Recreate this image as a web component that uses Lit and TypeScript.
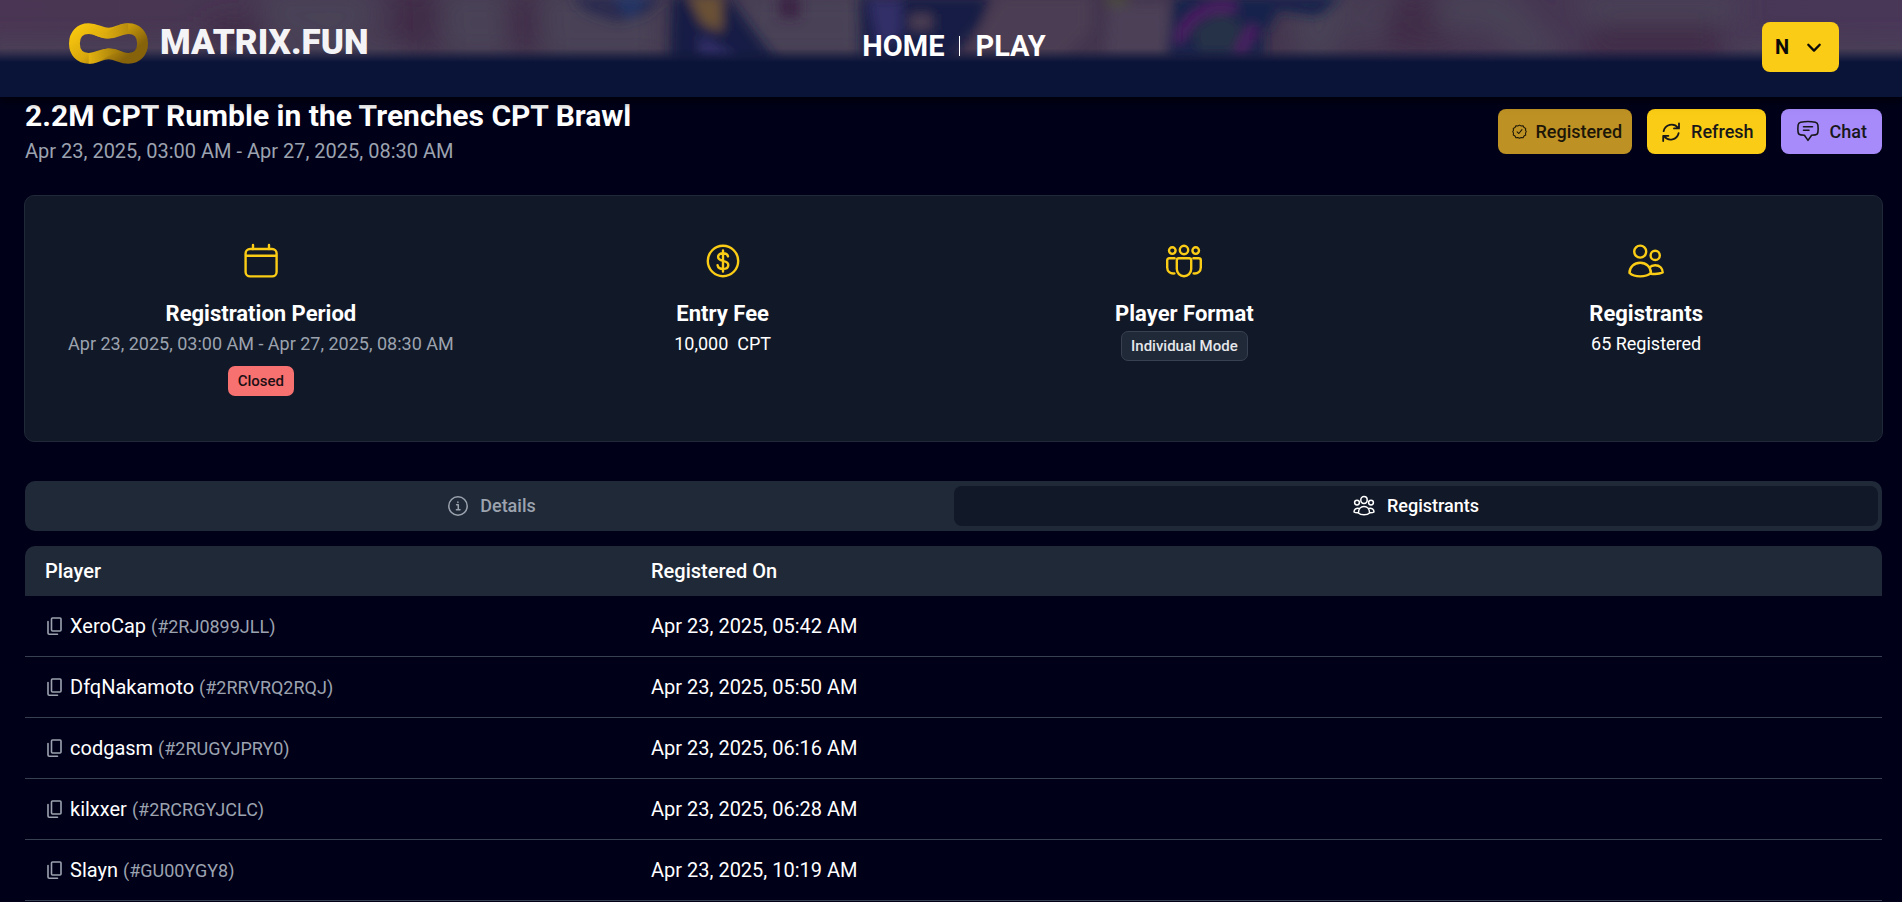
import { LitElement, html, svg, css } from "lit";
import { customElement, property, state } from "lit/decorators.js";
import { classMap } from "lit/directives/class-map.js";

const icons: Record<string, unknown> = {
  calendar: svg`<rect x="4.6" y="8" width="31" height="27.4" rx="4.5"/><path d="M5 14.8h30M12 4v4M28 4v4"/>`,
  dollar: svg`<circle cx="20" cy="20" r="15.2"/><path d="M20 9.5v21M25 15.4c-.4-2-2.400-3.200-5-3.200-2.800 0-4.900 1.400-4.900 3.800 0 5.300 10.200 2.500 10.200 7.900 0 2.600-2.300 4-5.300 4-3 0-5-1.400-5.400-3.700"/>`,
  team: svg`<circle cx="8.300" cy="9.600" r="3.300"/><circle cx="20" cy="9" r="4.200"/><circle cx="31.700" cy="9.600" r="3.300"/><path d="M14.800 17.200h10.400c1.200 0 2 .8 2 2v8.800a7.200 7.200 0 0 1-14.400 0v-8.800c0-1.200.8-2 2-2zM10.600 17.200H5.300c-1.300 0-2.100.8-2.100 2v7.300c0 3.800 3 6.500 7.200 5.900M29.400 17.200h5.300c1.300 0 2.100.8 2.100 2v7.300c0 3.800-3 6.500-7.200 5.900"/>`,
  people: svg`<circle cx="14.200" cy="10.600" r="6"/><circle cx="29.200" cy="14.400" r="4.600"/><path d="M14.200 21.800c6 0 10.700 4.300 10.700 10.100-2.500 2.400-6.400 3.500-10.700 3.500s-8.200-1.100-10.700-3.500c0-5.800 4.700-10.100 10.700-10.100zM23.300 26.600c1.400-1.500 3.500-2.400 5.900-2.400 4.400 0 7.500 3.100 7.500 7.200-2.300 1.300-7.200 1.900-11.800 1.400"/>`,
  refresh: svg`<path d="M2.600 9.200A8.200 8.200 0 0 1 17 5.800M18 1.400v5h-5M17.600 11.200A8.200 8.200 0 0 1 3.200 14.400M2.200 19v-5.200h5.200"/>`,
  chat: svg`<path d="M4.600 2.200C8 1.500 16 1.500 19.400 2.200c1.500.4 2.300 1.300 2.500 2.800.3 2.400.3 4.900 0 7.200-.2 1.600-1 2.600-2.600 2.700l-3.700.4-3.600 5.100-3.600-5.100-3.700-.4c-1.600-.1-2.400-1.100-2.600-2.700-.3-2.300-.3-4.800 0-7.200.2-1.500 1-2.400 2.500-2.800zM7.500 6.800h9M7.500 10.200h5.500"/>`,
  seal: svg`<path d="M10 1.500l2.300 1.100 2.500-.3 1.200 2.300 2.300 1.200-.3 2.500L19 10l-1 2.200.3 2.500-2.300 1.200-1.200 2.300-2.500-.3-2.300 1.100-2.300-1.100-2.500.3-1.200-2.300-2.300-1.200.3-2.500L1 10l1-1.700-.3-2.500L4 4.600l1.200-2.300 2.500.3zM6.800 10.500l2.300 2.200 4.200-5.200"/>`,
  info: svg`<circle cx="10" cy="10" r="9.200"/><path d="M8.600 8.800h1.700v5M8.400 13.800h3.600M9.900 6v.6"/>`,
  group: svg`<ellipse cx="11" cy="5" rx="3.200" ry="3.400"/><circle cx="4" cy="7.600" r="2.400"/><circle cx="18" cy="7.600" r="2.400"/><path d="M11 11.400c3.300 0 5.600 2.800 5.600 6.600-1.400 1.400-3.400 1.800-5.600 1.800s-4.200-.4-5.600-1.800c0-3.800 2.300-6.600 5.600-6.600zM6.600 13.600c-3.200-1-5.600.8-5.600 3.400.8.600 2.200.9 4.400.8M15.400 13.600c3.200-1 5.600.8 5.600 3.400-.8.600-2.200.9-4.400.8"/>`,
  copy: svg`<rect x="5.500" y="1" width="9.500" height="13" rx="1"/><path d="M2 4.500v11.500c0 .7.500 1.200 1.200 1.200h8.300"/>`,
  chevron: svg`<path d="M2 5l5 5.200L12 5"/>`,
};

@customElement("ui-icon")
class UiIcon extends LitElement {
  static styles = css`
    :host { display: inline-flex; flex: none; }
    .glyph { display: block; fill: none; stroke: currentColor; stroke-linecap: round; stroke-linejoin: round; overflow: visible; }
  `;
  @property() name = "";
  @property({ type: Number }) size = 20;
  @property({ type: Number }) box = 20;
  @property({ type: Number }) weight = 2;
  render() {
    return html`<svg class="glyph" aria-hidden="true" width=${this.size} height=${this.size}
      viewBox="0 0 ${this.box} ${this.box}" stroke-width=${this.weight}>${icons[this.name]}</svg>`;
  }
}

@customElement("site-header")
class SiteHeader extends LitElement {
  static styles = css`
    :host { display: block; position: relative; background: #0a1439; box-shadow: 0 3px 10px #000008; }
    .art { position: absolute; inset: 0; width: 100%; height: 100%; }
    .bar { position: relative; display: grid; grid-template-columns: 1fr auto 1fr; align-items: center; height: 97px; padding: 0 63px 0 69px; }
    .brand { display: flex; align-items: center; gap: 12px; color: #f4f4f6; text-decoration: none; font: 900 35px/42px Roboto, sans-serif; justify-self: start; padding-bottom: 11px; }
    .mark { display: block; }
    .links { display: flex; align-items: center; gap: 15px; font-size: 29px; line-height: 40px; font-weight: 700; padding-bottom: 6px; }
    .link { color: #fff; text-decoration: none; }
    .rule { width: 1px; height: 20px; background: #fff; }
    .user { display: flex; align-items: center; gap: 17px; height: 50px; padding: 0 17px 0 13px; margin-bottom: 3px; border: 0; border-radius: 8px; background: #facc15; color: #0a0a0a; font: 700 20px/28px Roboto, sans-serif; justify-self: end; }
  `;
  render() {
    return html`
      <svg class="art" viewBox="0 0 1902 97" preserveAspectRatio="none" aria-hidden="true">
        <defs>
          <filter id="soft" x="-5%" y="-50%" width="110%" height="200%"><feGaussianBlur stdDeviation="6"/></filter>
          <filter id="haze" x="-5%" y="-50%" width="110%" height="200%"><feGaussianBlur stdDeviation="13"/></filter>
          <linearGradient id="fade" x1="0" y1="0" x2="0" y2="97" gradientUnits="userSpaceOnUse">
            <stop offset=".5" stop-color="#0a1439" stop-opacity="0"/>
            <stop offset=".64" stop-color="#0a1439"/>
          </linearGradient>
          <linearGradient id="sky"><stop offset="0" stop-color="#4a3654"/><stop offset=".3" stop-color="#43374e"/><stop offset=".7" stop-color="#43354e"/><stop offset="1" stop-color="#493758"/></linearGradient>
        </defs>
        <rect width="1902" height="97" fill="url(#sky)"/>
        <g filter="url(#haze)">
          <path fill="#494257" d="M-20 44h440v24H-20zM260-10h110l10 34-40 20-70-10zM440-10h70l15 66h-80zM540-10h120v70H545zM740-10h130v70H735z"/>
          <path fill="#412b46" d="M395-10h45l-5 60h-40zM505 0l30-8v60h-25zM210 20h50v30h-50zM1390 0h44l20 46h-64zM1600 24h120v34h-140z"/>
          <path fill="#4a4356" d="M1290-10h66l-20 70h-40zM1374-10h20l-20 50h-22zM1446-10h60l62 66-40 4-46-34-52 4zM1570-5h170v28h-150zM1730 44h192v24h-192z"/>
        </g>
        <g filter="url(#soft)">
          <path fill="#2b2b50" d="M570-4h95l-18 18-30 8-30-10z"/>
          <path fill="#243466" d="M612-4h38l-20 24z"/>
          <path fill="#151d45" d="M672-4h55l50 66H670zM860-4h130l-10 29-30 35H862z"/>
          <path fill="#6b5135" d="M688-4h34v36l-20-8z"/>
          <path fill="#332f68" d="M700 34l38 24h-38zM868 0h34v36l-24 12z"/>
          <path fill="#3b2144" d="M778-4h22v22h-20z"/>
          <path fill="#4c3d52" d="M910 14h22v16h-22zM1000-4h90v34l-30 30h-90l10-32z"/>
          <path fill="#4c4157" d="M1110 4h58l4 54h-66z"/>
          <path fill="#4b4b3a" d="M1106-4h22v10h-22z"/>
          <path fill="#17204b" d="M1174-4h90v62h-98z"/>
          <path fill="#283247" d="M1192 30l28-18 24 12-10 28h-36z"/>
          <path fill="none" stroke="#541d68" stroke-width="9" d="M1178 42c8-24 26-38 58-34M1238 54l16-28"/>
          <path fill="#17204b" d="M1258-4h84l-24 20-40-6-10 20h-8z"/>
        </g>
        <rect width="1902" height="97" fill="url(#fade)"/>
      </svg>
      <div class="bar">
        <a class="brand" href="#home">
          <svg class="mark" width="79" height="41" viewBox="0 0 80 41" aria-hidden="true">
            <defs>
              <linearGradient id="gold" x1="0" y1="0" x2="1" y2=".5"><stop offset="0" stop-color="#f8c70e"/><stop offset=".5" stop-color="#d9a80d"/><stop offset="1" stop-color="#86620a"/></linearGradient>
              <linearGradient id="foldTop"><stop offset="0" stop-color="#e9b911"/><stop offset=".5" stop-color="#d3a30e"/><stop offset="1" stop-color="#b88c0c"/></linearGradient>
              <linearGradient id="foldLow"><stop offset="0" stop-color="#e3b310"/><stop offset="1" stop-color="#9a740a"/></linearGradient>
            </defs>
            <path fill="none" stroke="url(#gold)" stroke-width="11" d="M20 5.500C11 5.500 5.500 12 5.500 20.500S11 35.500 20 35.500c8 0 12-4.500 20-4.500s12 4.500 20 4.500c9 0 14.500-6.500 14.500-15S69 5.500 60 5.500c-8 0-12 4.500-20 4.500S28 5.500 20 5.500z"/>
            <path fill="url(#foldTop)" d="M26 12c8 4 14 4.500 22 1.500 4-1.500 7-2.500 12-2.500V0c-8 0-12 3-16 5.500-5 3.500-11 6-18 6.500z"/>
            <path fill="url(#foldLow)" d="M54 29c-8-4-14-4.500-22-1.500-4 1.500-7 2.500-12 2.500v11c8 0 12-3 16-5.500 5-3.500 11-6 18-6.500z"/>
          </svg>
          <span>MATRIX.FUN</span>
        </a>
        <nav class="links">
          <a class="link" href="#home">HOME</a><span class="rule"></span><a class="link" href="#play">PLAY</a>
        </nav>
        <button class="user" aria-label="Account menu"><span>N</span><ui-icon name="chevron" size="16" box="14" weight="2"></ui-icon></button>
      </div>`;
  }
}

interface Player { name: string; tag: string; time: string; }

@customElement("app-root")
class AppRoot extends LitElement {
  static styles = css`
    :host { display: block; height: 100vh; overflow: hidden; background: #000019; color: #fff; font: 400 20px/30px Roboto, sans-serif; }
    .page { padding: 0 20px 0 25px; }
    .top { display: flex; justify-content: space-between; align-items: flex-start; }
    .title { margin: 0; font-size: 30px; line-height: 38px; font-weight: 700; }
    .dates { margin: 0; color: #9ca3af; font-size: 20px; line-height: 32px; }
    .actions { display: flex; gap: 15px; padding-top: 12px; }
    .action { display: flex; align-items: center; height: 45px; border: 0; border-radius: 8px; padding: 0 12px 0 14px; gap: 10px; background: #facc15; color: #18181b; font: 500 18px/24px Roboto, sans-serif; }
    .registered { background: #bd9123; gap: 8px; padding-right: 10px; color: #1c1608; }
    .chat { background: #a78bfa; padding: 0 15px; }
    .summary { display: grid; grid-template-columns: repeat(4, 1fr); gap: 50px; margin: 28px -1px 0; padding: 45px 30px; border: 1px solid #1f2937; border-radius: 10px; background: #111827; min-height: 155px; }
    .fact { display: flex; flex-direction: column; align-items: center; text-align: center; }
    .fact ui-icon { color: #facc15; }
    .label { margin: 15px 0 0; font-size: 22px; line-height: 35px; font-weight: 700; }
    .value { margin: 0; font-size: 18px; line-height: 26px; white-space: pre; }
    .muted { color: #9ca3af; }
    .badge { border-radius: 7px; font-size: 15px; line-height: 20px; padding: 5px 10px; font-weight: 500; background: #f87171; color: #1c1014; margin-top: 9px; }
    .mode { background: #1f2937; color: #e5e7eb; border: 1px solid #374151; margin-top: 0; padding: 4px 9px; }
    .tabs { display: grid; grid-template-columns: 1fr 1fr; margin-top: 39px; padding: 5px 4px 5px 5px; border-radius: 10px; background: #1f2937; }
    .tab { display: flex; align-items: center; justify-content: center; gap: 12px; height: 40px; border: 0; border-radius: 8px; background: none; color: #9ca3af; font: 500 18px/24px Roboto, sans-serif; }
    .active { background: #111827; color: #fff; }
    .list { width: 100%; margin-top: 15px; border-collapse: separate; border-spacing: 0; table-layout: fixed; }
    .head { box-sizing: border-box; height: 50px; padding: 0 20px; background: #1f2937; text-align: left; font-weight: 500; }
    .first { width: 606px; }
    .head:first-child { border-top-left-radius: 10px; }
    .head:last-child { border-top-right-radius: 10px; }
    .cell { height: 60px; padding: 0 20px; border-bottom: 1px solid #374151; }
    .player { display: flex; align-items: center; gap: 6px; }
    .copy { display: flex; border: 0; padding: 0 0 0 1px; background: none; color: #9ca3af; }
    .tag { color: #9ca3af; font-size: 18px; }
  `;
  @state() tab = "Registrants";
  players: Player[] = [
    { name: "XeroCap", tag: "#2RJ0899JLL", time: "05:42" },
    { name: "DfqNakamoto", tag: "#2RRVRQ2RQJ", time: "05:50" },
    { name: "codgasm", tag: "#2RUGYJPRY0", time: "06:16" },
    { name: "kilxxer", tag: "#2RCRGYJCLC", time: "06:28" },
    { name: "Slayn", tag: "#GU00YGY8", time: "10:19" },
  ];
  fact(icon: string, label: string, body: unknown) {
    return html`<div class="fact"><ui-icon name=${icon} size="40" box="40" weight="2.4"></ui-icon><h2 class="label">${label}</h2>${body}</div>`;
  }
  tabButton(name: string, icon: string, box: number) {
    const on = this.tab === name;
    return html`<button role="tab" aria-selected=${on} class=${classMap({ tab: true, active: on })} @click=${() => (this.tab = name)}>
      <ui-icon name=${icon} .size=${box} .box=${box} weight="1.5"></ui-icon>${name}</button>`;
  }
  render() {
    const span = "Apr 23, 2025, 03:00 AM - Apr 27, 2025, 08:30 AM";
    return html`
      <site-header></site-header>
      <main class="page">
        <div class="top">
          <div><h1 class="title">2.2M CPT Rumble in the Trenches CPT Brawl</h1><p class="dates">${span}</p></div>
          <div class="actions">
            <button class="action registered"><ui-icon name="seal" size="15" box="20" weight="1.4"></ui-icon>Registered</button>
            <button class="action"><ui-icon name="refresh" size="20" box="20" weight="1.8"></ui-icon>Refresh</button>
            <button class="action chat"><ui-icon name="chat" size="24" box="24" weight="1.6"></ui-icon>Chat</button>
          </div>
        </div>
        <section class="summary">
          ${this.fact("calendar", "Registration Period", html`<p class="value muted">${span}</p><span class="badge">Closed</span>`)}
          ${this.fact("dollar", "Entry Fee", html`<p class="value">10,000  CPT</p>`)}
          ${this.fact("team", "Player Format", html`<span class="badge mode">Individual Mode</span>`)}
          ${this.fact("people", "Registrants", html`<p class="value">65 Registered</p>`)}
        </section>
        <div class="tabs" role="tablist">${this.tabButton("Details", "info", 20)}${this.tabButton("Registrants", "group", 22)}</div>
        <table class="list">
          <thead><tr><th class="head first">Player</th><th class="head">Registered On</th></tr></thead>
          <tbody>
            ${this.players.map((p) => html`<tr>
              <td class="cell"><div class="player"><button class="copy" aria-label="Copy tag of ${p.name}"><ui-icon name="copy" size="18" box="18" weight="1.6"></ui-icon></button>
                <span>${p.name} <span class="tag">(${p.tag})</span></span></div></td>
              <td class="cell">Apr 23, 2025, ${p.time} AM</td></tr>`)}
          </tbody>
        </table>
      </main>`;
  }
}
